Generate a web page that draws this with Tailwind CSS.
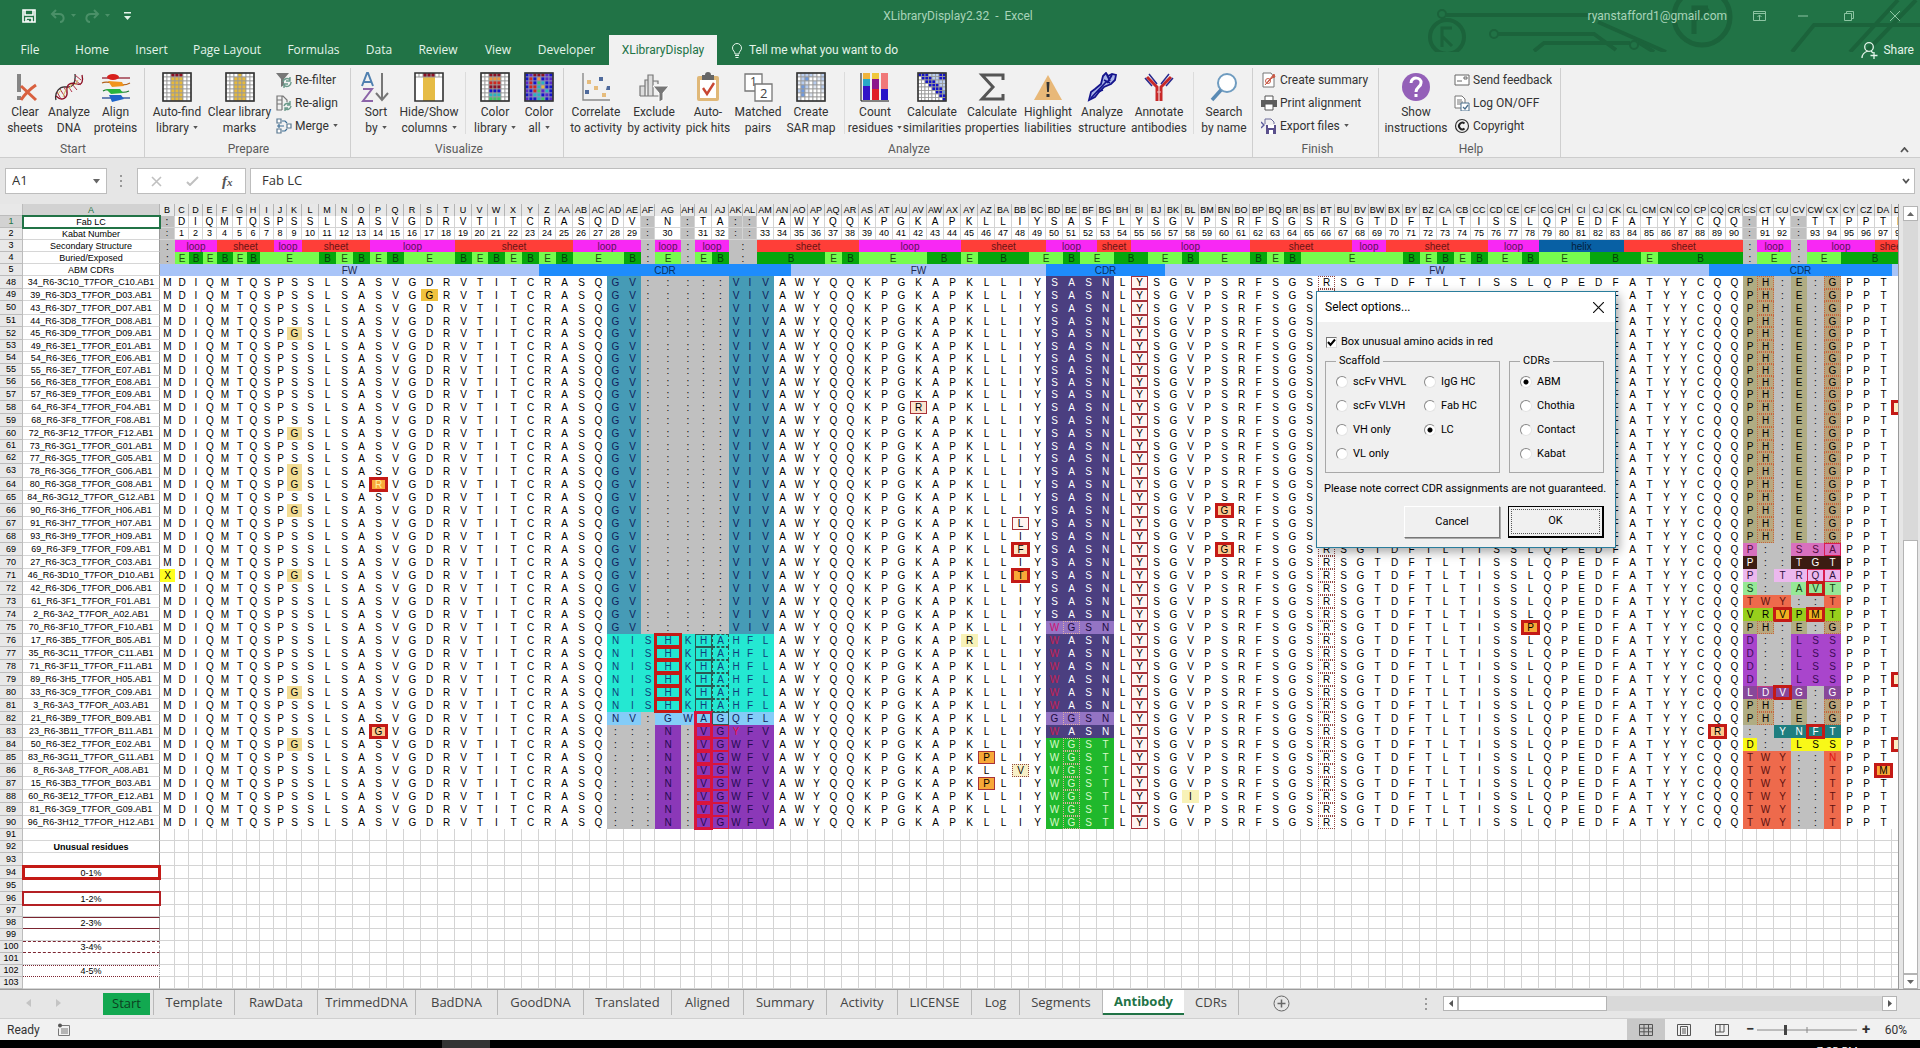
<!doctype html>
<html lang="en">

  <head>
    <meta charset="utf-8">
    <title>XLibraryDisplay2.32 - Excel</title>
    <script src="https://cdn.jsdelivr.net/npm/@tailwindcss/browser@4"></script>
    <script>
     // ---- ribbon ----
     const INK = {
       '.': '#fff', y: '#e6b93c', r: '#8c1024', o: '#f0913c', R: '#d0281e', b: '#1414c8', g: '#3cc864',
       l: '#b9cdee', k: '#6f9ae0', p: '#5a28c8', c: '#28b4be', d: '#1e3c96', n: '#dfe6f2',
     };
     // small spreadsheet picture, one letter per cell
     function sheetIcon(rows, line = '#9a9a9a') {
       const n = rows[0].length;
       const w = 28 / n;
       const h = 28 / rows.length;
       const cells = rows.map((row, y) => [...row].map((c, x) =>
         `<rect x="${1 + x * w}" y="${1 + y * h}" width="${w}" height="${h}" fill="${INK[c]}" stroke="${line}" stroke-width=".8"/>`
       ).join('')).join('');
       return `${cells}<rect x="1" y="1" width="28" height="28" fill="none" stroke="#333" stroke-width="1.6"/>`;
     }
     const ICONS = {
       clear: '<path d="M7 2h4v18H7z" fill="#858585"/><path d="M7 24h4v4H7z" fill="#858585"/><path d="M11 14l15 14M26 13C20 17 15 22 11 28" stroke="#d9603f" stroke-width="3" fill="none"/>',
       dna: '<path d="M2 28C0 20 6 14 12 15S22 12 21 2" fill="none" stroke="#333" stroke-width="1.3"/><path d="M2 24c6 6 12 2 11-5s4-9 10-7 6-5 5-9" fill="none" stroke="#8c1024" stroke-width="1.3"/><path d="M3 20l4 7M6 17l5 8M10 15l3 6M14 14l4 6M18 12l5 6M20 7l7 6M21 3l6 5" stroke="#b03048" stroke-width="1"/><path d="M4 22l3-4M9 25l3-8M15 17l3-5M21 13l3-5" stroke="#d8c060" stroke-width="1"/>',
       align: '<g stroke-width="1.2"><path d="M1 6h28" stroke="#8c1024"/><ellipse cx="12" cy="5" rx="6" ry="3" fill="#d8201c"/><path d="M1 11c8-4 18 6 28 0" stroke="#b0601c" fill="none"/><path d="M7 9l14 1 2 4-12 1z" fill="#f0941c"/><path d="M2 19c8-5 16 5 26 0" stroke="#147828" fill="none"/><path d="M5 17l14 0 3 4-12 1z" fill="#28b43c"/><path d="M1 26h28" stroke="#143c8c" /><path d="M8 23l12 0 3 4-12 3z" fill="#1e64c8"/></g>',
       autofind: sheetIcon(['..rrr..', '..yyy..', '..yyy..', '..yyy..', '..yyy..', '..yyy..', '..yyy..']),
       clearlib: sheetIcon(['...y...', '..yyy..', '..yyy..', '..yyy..', '..yyy..', '..yyy..', '..yyy..']),
       sort: '<path d="M1 14L6 1h1l5 13M3 10h7" fill="none" stroke="#5080b0" stroke-width="2"/><path d="M2 17h9L2 29h10" fill="none" stroke="#8c64a8" stroke-width="2"/><path d="M21 1v26M15 21l6 7 6-7" fill="none" stroke="#777" stroke-width="2"/>',
       hide: '<path d="M1 1h28v28H1z" fill="#fff"/><path d="M9 5h12v24H9z" fill="#e6bc46"/><path d="M9 1h12v4H9z" fill="#8c1024"/><path d="M5 1v4M9 1v4M13 1v4M17 1v4M21 1v4M25 1v4M1 5h28" stroke="#999"/><path d="M1 1h28v28H1z" fill="none" stroke="#333" stroke-width="1.6"/>',
       colorlib: sheetIcon(['..rrr..', '..ooo..', '..RRR..', '..rrr..', '..bbb..', '..ccc..', '..ggg..']),
       colorall: sheetIcon(['bprrrpb', 'bRbobpp', 'pRbgcbp', 'bRRcybb', 'pbRgpcb', 'bpccbpb', 'pbbcgbp'], '#8a8aba'),
       correlate: '<path d="M2 1v27h27" fill="none" stroke="#8a8a8a" stroke-width="1.4"/><path d="M18 5h4v4h-4zM4 18h4v4H4zM26 14h3v4h-4z" fill="#4f6a9c"/><path d="M6 8h4v4H6zM13 14h4v4h-4zM21 21h4v4h-4z" fill="#e6bc7c"/>',
       exclude: '<path d="M1 24V14h5v10M6 24V8h3M9 24V3h5v21M14 9h5v3M1 24h19" fill="#ddd" stroke="#777" stroke-width="1.2"/><path d="M14 14h16l-6 7v7l-4 2v-9z" fill="#777" stroke="#fff" stroke-width="1"/>',
       pick: '<rect x="4" y="4" width="22" height="25" rx="2" fill="#e0b878"/><path d="M7 8h16v18H7z" fill="#fff"/><path d="M9 3h3a3 3 0 016 0h3v5H9z" fill="#666"/><path d="M10 16l4 6 7-11" fill="none" stroke="#c84632" stroke-width="2.4"/>',
       matched: '<path d="M2 2h17v17H2z" fill="#fff" stroke="#777" stroke-width="1.3"/><path d="M12 12h17v17H12z" fill="#fff" stroke="#777" stroke-width="1.3"/><text x="7" y="14" font-size="12" fill="#444" font-family="Open Sans">1</text><text x="17" y="26" font-size="13" fill="#444" font-family="Open Sans">2</text>',
       sar: sheetIcon(['nllln.l', '.lk..nl', 'nln.l.n', '.kl.n.l', 'lkn...n', '.k.n...', 'n......']),
       count: '<path d="M3 1h7v6H3z" fill="#f0b43c"/><path d="M3 7h7v7H3z" fill="#28aac8"/><path d="M3 14h7v14H3z" fill="#3214c8"/><path d="M12 1h7v6h-7z" fill="#f0c83c"/><path d="M12 7h7v10h-7z" fill="#8c148c"/><path d="M12 17h7v11h-7z" fill="#e01e28"/><path d="M21 1h7v16h-7z" fill="#f07878"/><path d="M21 17h7v11h-7z" fill="#2814c8"/><path d="M1 1v28h28" fill="none" stroke="#111"/>',
       similar: sheetIcon(['bbblllbb', '.bbbllbb', '..bbblll', '...bbbll', '....bbbl', '.....bbk', '......bb', '.......b']),
       sigma: '<path d="M26 8V3H5l11 12L5 27h21v-5" fill="none" stroke="#555" stroke-width="3"/>',
       warn: '<path d="M15 3L29 28H1z" fill="#e8b878"/><path d="M13.5 10h3l-.6 10h-1.8zM13.5 22h3v3h-3z" fill="#333"/>',
       structure: '<path d="M2 28l2-8 4-3 6-5 2-8 3-3 2 3 4-2 4 1-1 5-4 4-7 3-5 5-4 5z" fill="#a9b4e8" stroke="#14148c" stroke-width="1.8"/><path d="M4 26L20 9M10 20l6-2M17 8l6 3M20 3l3 6M25 3l-5 8" stroke="#14148c" stroke-width="1.8" fill="none"/>',
       antibody: '<path d="M13 29V15L3 5M17 29V15L27 5" fill="none" stroke="#c82828" stroke-width="3"/><path d="M5 2l8 10M1 6l7 8M25 2l-8 10M29 6l-7 8" stroke="#28288c" stroke-width="1.5"/><path d="M13 20h4" stroke="#f0c0c0"/>',
       search: '<circle cx="18" cy="11" r="9" fill="#fff" stroke="#6f9cc0" stroke-width="2"/><path d="M12 18L3 28" stroke="#5a8ab4" stroke-width="3.5"/>',
       help: '<ellipse cx="15" cy="15" rx="14" ry="14" fill="#9460b8"/><path d="M10 11c0-7 11-6 10 0 0 4-5 4-5 9" fill="none" stroke="#fff" stroke-width="3"/><path d="M13.5 22h3v3h-3z" fill="#fff"/>',
       refilter: '<path d="M0 1h13L8 7v6l-3 2V7z" fill="#777"/><path d="M7 10a4 4 0 017-2M15 10a4 4 0 01-7 3M14 5v4h-4M8 16v-4h4" fill="none" stroke="#6a9a8a" stroke-width="1.4"/>',
       realign: '<path d="M6 15H1V1h6l4 4v2M1 5h5M1 9h5M6 1v14" fill="none" stroke="#777" stroke-width="1.2"/><path d="M8 11a4 4 0 016-2M15 11a4 4 0 01-6 3M14 6v4h-3M9 16v-3h3" fill="none" stroke="#6a9a8a" stroke-width="1.4"/>',
       merge: '<path d="M1 1h4v4H1zM1 11h4v4H1zM11 6h4v4h-4z" fill="#fff" stroke="#5a7890" stroke-width="1.2"/><path d="M3 6v4M1 8h7M6 3h3l2 2M6 13h3l2-2" fill="none" stroke="#3c6e96" stroke-width="1.2"/>',
       summary: '<path d="M2 1h8l3 4v10H2z" fill="#fff" stroke="#777"/><circle cx="7" cy="9" r="2.5" fill="none" stroke="#c85a46"/><path d="M4 13l9-11 1 3-3 1z" fill="#c85a46" stroke="#c85a46"/>',
       print: '<path d="M4 1h8v5H4z" fill="#fff" stroke="#555"/><path d="M0 5h16v7H0z" fill="#5c5c5c"/><path d="M4 9h8v6H4z" fill="#fff" stroke="#555"/>',
       export: '<path d="M4 6V1h6l3 3v2" fill="none" stroke="#6a6a9a"/><path d="M0 4l3 3-3 3" fill="none" stroke="#5a5a9a" stroke-width="1.4"/><path d="M5 7h10v9H5z" fill="#5a508c"/><path d="M7 7h6v3H7zM8 12h4v4H8z" fill="#fff"/>',
       mail: '<path d="M1 3h14v10H1z" fill="#fff" stroke="#666"/><path d="M10 5h3v2h-3zM3 9h5" stroke="#666" fill="none"/>',
       log: '<path d="M1 1h7l3 3v9H1zM3 5h5M3 7h6M3 9h4" fill="#fff" stroke="#777"/><path d="M7 8h8v8H7z" fill="#fff" stroke="#4a6e8c"/><path d="M9 12l2 2 3-4" fill="none" stroke="#4a6e8c" stroke-width="1.3"/>',
       copyright: '<circle cx="8" cy="8" r="6.5" fill="none" stroke="#333" stroke-width="1.2"/><path d="M10.5 5.5a3.3 3.3 0 100 5" fill="none" stroke="#222" stroke-width="2"/>',
     };
     const BIG = 'flex flex-col items-center gap-[2px] shrink-0';
     const RIBBON = [
       { title: 'Start', cls: 'w-[145px] pl-[2px]', items: [
         ['clear', 'Clear', 'sheets', 'w-[46px]'],
         ['dna', 'Analyze', 'DNA', 'w-[42px]'],
         ['align', 'Align', 'proteins', 'w-[51px]'],
       ] },
       { title: 'Prepare', cls: 'w-[206px] pl-[2px]', items: [
         ['autofind', 'Auto-find', 'library', 'w-[60px]', true],
         ['clearlib', 'Clear library', 'marks', 'w-[65px]'],
         { small: [['refilter', 'Re-filter'], ['realign', 'Re-align'], ['merge', 'Merge', true]] },
       ] },
       { title: 'Visualize', cls: 'w-[213px] pl-1', items: [
         ['sort', 'Sort', 'by', 'w-[42px]', true],
         ['hide', 'Hide/Show', 'columns', 'w-[64px]', true],
         'line',
         ['colorlib', 'Color', 'library', 'w-[50px]', true],
         ['colorall', 'Color', 'all', 'w-[38px]', true],
       ] },
       { title: 'Analyze', cls: 'w-[689px] pl-[2px]', items: [
         ['correlate', 'Correlate', 'to activity', 'w-[60px]'],
         ['exclude', 'Exclude', 'by activity', 'w-[56px]'],
         ['pick', 'Auto-', 'pick hits', 'w-[52px]'],
         ['matched', 'Matched', 'pairs', 'w-[48px]'],
         ['sar', 'Create', 'SAR map', 'w-[58px]'],
         'line',
         ['count', 'Count', 'residues', 'w-[52px]', true],
         ['similar', 'Calculate', 'similarities', 'w-[62px]'],
         ['sigma', 'Calculate', 'properties', 'w-[58px]'],
         ['warn', 'Highlight', 'liabilities', 'w-[54px]'],
         ['structure', 'Analyze', 'structure', 'w-[54px]'],
         ['antibody', 'Annotate', 'antibodies', 'w-[60px]'],
         'line',
         ['search', 'Search', 'by name', 'w-[52px]'],
       ] },
       { title: 'Finish', cls: 'w-[126px] pl-1', items: [
         { small: [['summary', 'Create summary'], ['print', 'Print alignment'], ['export', 'Export files', true]] },
       ] },
       { title: 'Help', cls: 'w-[182px] pl-[3px]', items: [
         ['help', 'Show', 'instructions', 'w-[68px]'],
         { small: [['mail', 'Send feedback'], ['log', 'Log ON/OFF'], ['copyright', 'Copyright']] },
       ] },
     ];
     const CARET = '<svg class="inline ml-1 mb-[2px] w-[5px] h-[3px]" viewBox="0 0 6 4"><path d="M0 0h6L3 4z" fill="#555"/></svg>';
     function addRibbon() {
       document.getElementById('ribbon').innerHTML = RIBBON.map((group) => {
         const items = group.items.map((item) => {
           if (item === 'line') {
             return '<div class="w-px h-[62px] bg-[#dcdcdc] mx-1 shrink-0"></div>';
           }
           if (item.small) {
             return `<div class="flex flex-col ml-1 -mt-1">${item.small.map(([icon, text, drop]) => `
               <button class="flex items-center gap-[3px] h-[23px] whitespace-nowrap">
                 <svg class="w-4 h-4" viewBox="0 0 16 16">${ICONS[icon]}</svg><span>${text}${drop ? CARET : ''}</span>
               </button>`).join('')}</div>`;
           }
           const [icon, top, bottom, width, drop] = item;
           return `
             <button class="${BIG} ${width}">
               <svg class="w-[30px] h-[30px]" viewBox="0 0 30 30">${ICONS[icon]}</svg>
               <span class="leading-4 whitespace-nowrap">${top}<br>${bottom}${drop ? CARET : ''}</span>
             </button>`;
         }).join('');
         return `
           <section class="flex flex-col justify-between mt-[3px] border-r border-[#cfcfcf] shrink-0 ${group.cls}">
             <div class="flex pt-1">${items}</div>
             <h2 class="text-center text-[#5a5a5a] leading-4">${group.title}</h2>
           </section>`;
       }).join('');
     }

     // ---- worksheet ----
     const COLS = [];
     for (let i = 2; i <= 106; i++) {
       COLS.push((i > 26 ? String.fromCharCode(64 + Math.floor((i - 1) / 26)) : '') + String.fromCharCode(65 + (i - 1) % 26));
     }
     const WIDTHS = {
       B: 15, C: 14, D: 14, E: 14, F: 16, G: 14, H: 13, I: 14, J: 13, K: 15, V: 16,
       AF: 14, AG: 26, AH: 14, AK: 14, AL: 14, CS: 14, CV: 16,
     };
     const at = (name) => COLS.indexOf(name);

     const GRAY = 'bg-[#c0c0c0]';
     const THICK = 'outline-3 -outline-offset-2 outline-[#c41a16]';
     const THIN = 'outline-1 -outline-offset-1 outline-[#a8323a]';
     const DARK = 'outline-1 -outline-offset-1 outline-[#2c5a54]';
     const DOTS = 'outline-1 -outline-offset-1 outline-dotted outline-[#904440]';
     const RUST = 'outline-1 -outline-offset-1 outline-dotted outline-[#c8643c]';
     const DASH = 'outline-1 -outline-offset-1 outline-dashed outline-[#2c5a54]';
     const TEAL = 'bg-[#469bb6] text-[#10205a]';
     const CYAN = 'bg-[#24e8d2] text-[#10407a]';
     const VIOLET = 'bg-[#8b38b8] text-[#240a50]';
     const INDIGO = 'bg-[#4b3f80] text-white';
     const LILAC = 'bg-[#9474c4] text-[#1c0a40]';
     const GREEN = 'bg-[#20b82c] text-[#d8f8c8]';
     const KHAKI = 'bg-[#b0ac82]';
     const CORAL = 'bg-[#ee6a4c] text-[#5c1010]';
     const PURPLE = 'bg-[#a945cc] text-[#3c0a58]';
     const PALE = 'bg-[#f2dc94]';
     const ORANGE = 'bg-[#f8a838]';
     const PEACH = 'bg-[#fcc88c]';

     const HEAD = ':DIQMTQSPSSLSASVGDRVTITCRASQDV:N:TA::VAWYQQKPGKAPKLLIYSASFLYSGVPSRFSGSRSGTDFTLTISSLQPEDFATYYCQQ:HY:TTPPTF';
     const BASE = 'MDIQMTQSPSSLSASVGDRVTITCRASQGV:::::VIVAWYQQKPGKAPKLLIYSASNLYSGVPSRFSGSRSGTDFTLTISSLQPEDFATYYCQQPH:E:GPPT ';

     // [last column, label] runs for the merged heading rows
     const STRUCTURE = [['B', ':'], ['E', 'loop'], ['I', 'sheet'], ['K', 'loop'], ['O', 'sheet'], ['T', 'loop'], ['AA', 'sheet'],
       ['AE', 'loop'], ['AF', ':'], ['AG', 'loop'], ['AH', ':'], ['AJ', 'loop'], ['AL', ':'], ['AR', 'sheet'], ['AX', 'loop'],
       ['BC', 'sheet'], ['BF', 'loop'], ['BH', 'sheet'], ['BO', 'loop'], ['BU', 'sheet'], ['BW', 'loop'], ['CC', 'sheet'],
       ['CF', 'loop'], ['CK', 'helix'], ['CR', 'sheet'], ['CS', ':'], ['CU', 'loop'], ['CV', ':'], ['CZ', 'loop'], ['DB', 'sheet']];
     const BURIED = [['B', ':'], ['C', 'E'], ['D', 'B'], ['E', 'E'], ['F', 'B'], ['G', 'E'], ['H', 'B'], ['L', 'E'], ['M', 'B'],
       ['N', 'E'], ['O', 'B'], ['P', 'E'], ['Q', 'B'], ['T', 'E'], ['U', 'B'], ['V', 'E'], ['W', 'B'], ['X', 'E'], ['Y', 'B'],
       ['Z', 'E'], ['AA', 'B'], ['AD', 'E'], ['AE', 'B'], ['AF', ':'], ['AG', 'E'], ['AH', ':'], ['AI', 'E'], ['AJ', 'B'],
       ['AL', ':'], ['AP', 'B'], ['AQ', 'E'], ['AR', 'B'], ['AV', 'E'], ['AX', 'B'], ['AY', 'E'], ['BB', 'B'], ['BD', 'E'],
       ['BE', 'B'], ['BG', 'E'], ['BI', 'B'], ['BK', 'E'], ['BL', 'B'], ['BO', 'E'], ['BP', 'B'], ['BQ', 'E'], ['BR', 'B'],
       ['BX', 'E'], ['BY', 'B'], ['BZ', 'E'], ['CA', 'B'], ['CB', 'E'], ['CC', 'B'], ['CE', 'E'], ['CF', 'B'], ['CI', 'E'],
       ['CL', 'B'], ['CM', 'E'], ['CR', 'B'], ['CS', ':'], ['CU', 'E'], ['CV', ':'], ['CX', 'E'], ['DB', 'B']];
     const REGIONS = [['Y', 'FW'], ['AN', 'CDR'], ['BC', 'FW'], ['BJ', 'CDR'], ['CP', 'FW'], ['DA', 'CDR'], ['DB', '']];
     const RUN_CLS = {
       ':': GRAY,
       loop: 'bg-[#f828f4] text-[#5a1058]',
       sheet: 'bg-[#ff3e38] text-[#681414]',
       helix: 'bg-[#0860a4] text-[#04203c]',
       E: 'bg-[#76fc4e] text-[#1c5010]',
       B: 'bg-[#06a60c] text-[#044008]',
       FW: 'bg-[#a8c4f8] text-[#202850]',
       CDR: 'bg-[#1e8cfc] text-[#08305c]',
       '': 'bg-[#a8c4f8]',
     };

     const NAMES = `34_R6-3C10_T7FOR_C10 39_R6-3D3_T7FOR_D03 43_R6-3D7_T7FOR_D07 44_R6-3D8_T7FOR_D08 45_R6-3D9_T7FOR_D09
       49_R6-3E1_T7FOR_E01 54_R6-3E6_T7FOR_E06 55_R6-3E7_T7FOR_E07 56_R6-3E8_T7FOR_E08 57_R6-3E9_T7FOR_E09
       64_R6-3F4_T7FOR_F04 68_R6-3F8_T7FOR_F08 72_R6-3F12_T7FOR_F12 73_R6-3G1_T7FOR_G01 77_R6-3G5_T7FOR_G05
       78_R6-3G6_T7FOR_G06 80_R6-3G8_T7FOR_G08 84_R6-3G12_T7FOR_G12 90_R6-3H6_T7FOR_H06 91_R6-3H7_T7FOR_H07
       93_R6-3H9_T7FOR_H09 69_R6-3F9_T7FOR_F09 27_R6-3C3_T7FOR_C03 46_R6-3D10_T7FOR_D10 42_R6-3D6_T7FOR_D06
       61_R6-3F1_T7FOR_F01 2_R6-3A2_T7FOR_A02 70_R6-3F10_T7FOR_F10 17_R6-3B5_T7FOR_B05 35_R6-3C11_T7FOR_C11
       71_R6-3F11_T7FOR_F11 89_R6-3H5_T7FOR_H05 33_R6-3C9_T7FOR_C09 3_R6-3A3_T7FOR_A03 21_R6-3B9_T7FOR_B09
       23_R6-3B11_T7FOR_B11 50_R6-3E2_T7FOR_E02 83_R6-3G11_T7FOR_G11 8_R6-3A8_T7FOR_A08 15_R6-3B3_T7FOR_B03
       60_R6-3E12_T7FOR_E12 81_R6-3G9_T7FOR_G09 96_R6-3H12_T7FOR_H12`.split(/\s+/);
     const HEIGHTS = {
       49: 12, 51: 12, 53: 12, 54: 12, 55: 12, 56: 12, 50: 14, 61: 12, 62: 12, 63: 14,
     };
     const rowHeight = (n) => HEIGHTS[n] ?? (n < 6 ? 12 : n < 91 ? 13 : n > 92 && n < 97 ? 13 : 12);

     // [first row, last row, first column, residues, fill]
     const LOOPS = [
       [48, 75, 'AD', 'GV:::::VIV', TEAL],
       [76, 81, 'AD', 'NISHKHAHFL', CYAN],
       [82, 82, 'AD', 'NV:GWAGQFL', 'bg-[#84ccf8] text-[#10205a]'],
       [83, 83, 'AD', ':::N:VGYFV', VIOLET],
       [84, 90, 'AD', ':::N:VGWFV', VIOLET],
       [48, 74, 'BD', 'SASN', INDIGO],
       [75, 75, 'BD', 'WGSN', LILAC],
       [76, 81, 'BD', 'WASN', INDIGO],
       [82, 82, 'BD', 'GGSN', LILAC],
       [83, 83, 'BD', 'WASN', INDIGO],
       [84, 90, 'BD', 'WGST', GREEN],
       [48, 68, 'CS', 'PH:E:G', KHAKI],
       [69, 69, 'CS', 'P::SSA', 'bg-[#d870be] text-[#500a40]'],
       [70, 70, 'CS', 'P::TGT', 'bg-[#3c1c12] text-white'],
       [71, 71, 'CS', 'P:TRQA', 'bg-[#ecb8ee] text-[#301040]'],
       [72, 72, 'CS', 'S::AVT', 'bg-[#96e896] text-[#104010]'],
       [73, 73, 'CS', 'TWY::T', CORAL],
       [74, 74, 'CS', 'VRVPMT', 'bg-[#98d01c]'],
       [75, 75, 'CS', 'PH:E:G', KHAKI],
       [76, 79, 'CS', 'D::LSS', PURPLE],
       [80, 80, 'CS', 'LDVG:G', 'bg-[#88489a] text-white'],
       [81, 82, 'CS', 'PH:E:G', KHAKI],
       [83, 83, 'CS', '::YNFT', 'bg-[#1e7e80] text-white'],
       [84, 84, 'CS', 'D::LSS', 'bg-[#f8f818]'],
       [85, 90, 'CS', 'TWY::T', CORAL],
     ];
     // [rows, column, residue or null to keep it, classes]
     const MARKS = [
       [[49], 'S', 'G', 'bg-[#f0c23e]'],
       [[52, 60, 63, 64, 66, 71, 80, 84], 'K', 'G', PALE],
       [[64], 'P', 'R', `${ORANGE} text-[#fff0a0] ${THICK}`],
       [[83], 'P', 'G', `${PEACH} ${THICK}`],
       [[71], 'B', 'X', 'bg-[#ffff20]'],
       [[58], 'AV', 'R', `bg-[#fce4d0] ${THIN}`],
       [[67], 'BB', 'L', `bg-[#fff4f0] ${THIN}`],
       [[69], 'BB', 'F', `bg-[#fce4c4] ${THICK}`],
       [[71], 'BB', 'T', `${ORANGE} ${THICK}`],
       [[86], 'BB', 'V', `bg-[#f8f0c8] ${DOTS}`],
       [[76], 'AY', 'R', 'bg-[#f8f2b8]'],
       [[88], 'BL', 'I', 'bg-[#f8f2b8]'],
       [[85, 87], 'AZ', 'P', `${ORANGE} ${THIN}`],
       [[66, 69], 'BN', 'G', `${PEACH} ${THICK}`],
       [[75], 'CF', 'P', `${ORANGE} ${THICK}`],
       [[83], 'CQ', 'R', `${PEACH} ${THICK}`],
       [[86], 'DA', 'M', `${ORANGE} ${THICK}`],
       [[58, 79, 84], 'DB', '', `bg-[#fcecc4] ${THICK}`],
       [[76, 77, 78, 79, 80, 81], 'AG', null, THICK],
       [[76, 77, 78, 79, 80, 81], 'AJ', null, DASH],
       [[82], 'AJ', null, DARK],
       [[83, 84, 85, 86, 87, 88, 89, 90], 'AJ', null, 'outline-1 -outline-offset-1 outline-[#d8143c]'],
       [[76, 77, 78, 79, 80, 81], 'AI', null, DARK],
       [[82, 83, 84, 85, 86, 87, 88, 89, 90], 'AI', null, 'outline-3 -outline-offset-2 outline-[#d8143c]'],
       [[76, 77, 78, 79, 80, 81, 83], 'BD', null, 'bg-[#4b3f80] text-[#c81e50]'],
       [[75], 'BD', null, 'bg-[#9474c4] text-[#d01070]'],
       [[83], 'AK', null, 'bg-[#8b38b8] text-[#e01040]'],
       [[75, 82, 84, 85, 86, 87, 88, 89, 90], 'BE', null, 'outline-1 -outline-offset-1 outline-dotted outline-[#e0b0a0]'],
       [[69, 71], 'CX', null, 'outline-1 -outline-offset-1 outline-[#d81c50]'],
       [[71], 'CW', null, 'outline-1 -outline-offset-1 outline-[#d81c50]'],
       [[72, 83], 'CW', null, THICK],
       [[74], 'CU', null, `bg-[#f0b020] ${THICK}`],
       [[74], 'CW', null, `bg-[#f0b020] ${THICK}`],
       [[80], 'CU', null, THICK],
       [[80], 'CT', null, 'outline-1 -outline-offset-1 outline-[#c83c80]'],
       [[85], 'CX', 'N', 'bg-[#ee6a4c] text-[#e01010]'],
     ];

     function gridRow(n, label, cells, labelCls = 'border-b border-b-[#d6d6d6]') {
       const on = n === 1 ? 'bg-[#d2d2d2] text-[#217346]' : 'bg-[#e8e8e8]';
       return `
         <tr style="height:${rowHeight(n)}px">
           <th scope="row" class="p-0 text-[9px] leading-[11px] font-normal border-b border-r border-[#bcbcbc] ${on}">${n}</th>
           <td class="p-0 text-[9px] leading-[10px] border-r border-r-[#9a9a9a] bg-white ${labelCls}">${label}</td>
           ${cells}
         </tr>`;
     }
     function runs(list) {
       let from = 0;
       return list.map(([last, text]) => {
         const span = at(last) - from + 1;
         from += span;
         return `<td colspan="${span}" class="p-0 ${RUN_CLS[text]}">${text}</td>`;
       }).join('');
     }
     function residues(n) {
       const text = [...BASE];
       const cls = COLS.map(() => '');
       LOOPS.filter(([a, b]) => n >= a && n <= b).forEach(([, , col, seq, fill]) => {
         [...seq].forEach((c, i) => {
           text[at(col) + i] = c;
           cls[at(col) + i] = c === ':' ? GRAY : fill;
         });
       });
       cls[at('BI')] = `bg-[#fff4f2] ${THIN}`;
       cls[at('BT')] = DOTS;
       if (cls[at('CS')] === KHAKI) {
         cls[at('CT')] = `bg-[#baa880] ${RUST}`;
         cls[at('CX')] = `bg-[#b8a27a] ${RUST}`;
       }
       MARKS.filter(([rows]) => rows.includes(n)).forEach(([, col, c, add]) => {
         const i = at(col);
         if (c !== null) text[i] = c;
         cls[i] = add.startsWith('bg-') ? add : `${cls[i]} ${add}`;
       });
       return COLS.map((_, i) => `<td class="p-0 ${cls[i]}">${text[i]}</td>`).join('');
     }
     function addSheet() {
       const cols = COLS.map((c) => `<col style="width:${WIDTHS[c] ?? 17}px">`).join('');
       const heads = COLS.map((c) => `<th scope="col" class="p-0 font-normal border-r border-[#b4b4b4]">${c}</th>`).join('');
       const line = 'p-0 border-r border-b border-[#d4d4d4]';
       let number = 0;
       const first = [...HEAD].map((c) => `<td class="${line} ${c === ':' ? GRAY : ''}">${c}</td>`).join('');
       const second = [...HEAD].map((c) => `<td class="${line} text-[9px] ${c === ':' ? GRAY : ''}">${c === ':' ? c : ++number}</td>`).join('');
       const body = [
         gridRow(1, 'Fab LC', first, 'relative outline-2 -outline-offset-1 outline-[#217346]'),
         gridRow(2, 'Kabat Number', second),
         gridRow(3, 'Secondary Structure', runs(STRUCTURE)),
         gridRow(4, 'Buried/Exposed', runs(BURIED)),
         gridRow(5, 'ABM CDRs', runs(REGIONS)),
       ];
       NAMES.forEach((name, i) => body.push(gridRow(48 + i, `${name}.AB1`, residues(48 + i))));
       const legend = {
         92: ['Unusual residues', 'font-bold border-b border-b-[#d6d6d6]'],
         94: ['0-1%', 'outline-3 -outline-offset-2 outline-[#c41a16]'],
         96: ['1-2%', 'outline-2 -outline-offset-1 outline-[#b42024]'],
         98: ['2-3%', 'border-y border-y-[#7c2430]'],
         100: ['3-4%', 'border-y border-y-[#7c2430] border-dashed'],
         102: ['4-5%', 'border-y border-y-[#7c2430] border-dotted'],
       };
       const empty = COLS.map(() => `<td class="${line}"></td>`).join('');
       for (let n = 91; n <= 103; n++) {
         body.push(gridRow(n, ...(legend[n] ? [legend[n][0], empty, legend[n][1]] : ['', empty])));
       }
       document.getElementById('sheet').innerHTML = `
         <colgroup><col style="width:23px"><col style="width:137px">${cols}</colgroup>
         <thead class="text-[9px] leading-[11px] bg-[#e8e8e8]">
           <tr style="height:12px">
             <th class="p-0 border-r border-b border-[#bcbcbc]"></th>
             <th scope="col" class="p-0 font-normal bg-[#d2d2d2] border-r border-[#b4b4b4] text-[#217346]">A</th>${heads}
           </tr>
         </thead>
         <tbody>${body.join('')}</tbody>`;
     }

     // ---- sheet tabs ----
     const TABS = [
       ['Template', 'w-[81px]'], ['RawData', 'w-[83px]'], ['TrimmedDNA', 'w-[98px]'], ['BadDNA', 'w-[82px]'],
       ['GoodDNA', 'w-[86px]'], ['Translated', 'w-[88px]'], ['Aligned', 'w-[72px]'], ['Summary', 'w-[83px]'],
       ['Activity', 'w-[71px]'], ['LICENSE', 'w-[74px]'], ['Log', 'w-[48px]'], ['Segments', 'w-[83px]'],
       ['Antibody', 'w-[81px]'], ['CDRs', 'w-[55px]'],
     ];
     function addTabs() {
       document.getElementById('tabs').innerHTML = TABS.map(([name, width]) => {
         const look = name === 'Antibody'
           ? 'h-[25px] bg-white font-bold text-[#217346] border-b-2 border-[#217346]'
           : 'h-[25px] border-r border-[#b8b8b8]';
         return `<button class="${width} ${look}">${name}</button>`;
       }).join('');
     }
     window.onload = () => {
       addRibbon();
       addSheet();
       addTabs();
     };
    </script>
  </head>

  <body class="h-screen flex flex-col overflow-hidden bg-[#e6e6e6] text-[12px] text-[#333] font-['Open_Sans',sans-serif]">

    <header class="relative bg-[#217346] text-[#e4f4ea] shrink-0">
      <svg class="absolute right-0 top-0 w-[500px] h-[52px]" viewBox="0 0 500 52" fill="none" stroke="#1b633b" stroke-width="4">
        <circle cx="22" cy="14" r="4" stroke-width="2"/><path d="M26 15h146M178 22l68 30"/>
        <circle cx="27" cy="37" r="17"/><path d="M22 47V28h10M22 36l10 10" stroke-width="3"/>
        <circle cx="74" cy="34" r="4" stroke-width="2"/><path d="M78 34h96l22 16M114 51l10-8h86M218 42l16 10"/><circle cx="214" cy="45" r="4" stroke-width="2"/>
        <circle cx="282" cy="17" r="28" stroke-width="5"/><path d="M274 34V8h14M274 20l14-12" stroke-width="5"/>
        <path d="M372 52l22-27h106M430 52L478 0M446 52L496 0"/>
      </svg>
      <div class="relative flex items-center h-[32px] mb-[3px] text-[#a8d4b9] font-[Roboto,sans-serif]">
        <button class="ml-[22px]" aria-label="Save"><svg class="w-[14px] h-[14px]" viewBox="0 0 14 14" fill="none" stroke="#fff" stroke-width="1.6"><path d="M1 1h12v12H1zM3 1v5h8V1M4 13V9h6v4M6 11v2"/></svg></button>
        <button class="ml-[14px]" aria-label="Undo"><svg class="w-[28px] h-[14px]" viewBox="0 0 28 14" fill="none" stroke="#4a9068" stroke-width="2"><path d="M6 1L2 5l4 4M2 5h7c6 0 6 8 1 8"/><path d="M21 5h5l-2.5 3z" fill="#4a9068" stroke="none"/></svg></button>
        <button class="ml-[7px]" aria-label="Redo"><svg class="w-[28px] h-[14px]" viewBox="0 0 28 14" fill="none" stroke="#4a9068" stroke-width="2"><path d="M9 1l4 4-4 4M13 5H6c-6 0-6 8-1 8"/><path d="M20 5h5l-2.5 3z" fill="#4a9068" stroke="none"/></svg></button>
        <button class="ml-[11px]" aria-label="Customize toolbar"><svg class="w-[7px] h-[8px]" viewBox="0 0 7 8"><path d="M0 0h7v1.5H0zM0 4h7L3.5 8z" fill="#e4f4ea"/></svg></button>
        <h1 class="absolute left-0 right-[4px] text-center pointer-events-none">XLibraryDisplay2.32&nbsp; -&nbsp; Excel</h1>
        <div class="ml-auto flex items-center">
          <span class="mr-[26px]">ryanstafford1@gmail.com</span>
          <button aria-label="Ribbon display options" class="mr-[32px]"><svg class="w-[13px] h-[10px]" viewBox="0 0 13 10" fill="none" stroke="#8cc4a2"><path d="M.5.5h12v9H.5zM.5 2.5h12M6.5 9V4M4.5 6l2-2 2 2"/></svg></button>
          <button aria-label="Minimize" class="mr-[36px]"><svg class="w-[10px] h-[10px]" viewBox="0 0 10 10"><path d="M0 5h10" stroke="#8cc4a2"/></svg></button>
          <button aria-label="Restore" class="mr-[36px]"><svg class="w-[10px] h-[10px]" viewBox="0 0 10 10" fill="none" stroke="#8cc4a2"><path d="M.5 2.5h7v7h-7zM2.5 2.5v-2h7v7h-2"/></svg></button>
          <button aria-label="Close" class="mr-[20px]"><svg class="w-[10px] h-[10px]" viewBox="0 0 10 10" stroke="#8cc4a2"><path d="M0 0l10 10M10 0L0 10"/></svg></button>
        </div>
      </div>
      <nav class="relative flex h-[30px]">
        <button class="w-[60px]">File</button>
        <button class="w-[64px]">Home</button>
        <button class="w-[55px]">Insert</button>
        <button class="w-[96px]">Page Layout</button>
        <button class="w-[77px]">Formulas</button>
        <button class="w-[54px]">Data</button>
        <button class="w-[64px]">Review</button>
        <button class="w-[56px]">View</button>
        <button class="w-[81px]">Developer</button>
        <button class="w-[108px] ml-[2px] bg-[#f1f1f1] text-[#217346] font-[Roboto,sans-serif]">XLibraryDisplay</button>
        <button class="ml-[15px] flex items-center gap-[7px] font-[Roboto,sans-serif]"><svg class="w-[10px] h-[15px]" viewBox="0 0 10 15" fill="none" stroke="#e4f4ea"><path d="M3 11C3 8 .5 8 .5 5a4.5 4.5 0 019 0C9.5 8 7 8 7 11zM3 12.5h4M3.5 14.5h3"/></svg>Tell me what you want to do</button>
        <button class="ml-auto mr-[6px] flex items-center gap-[5px] font-[Roboto,sans-serif]"><svg class="w-[17px] h-[17px]" viewBox="0 0 17 17" fill="none" stroke="#e4f4ea" stroke-width="1.3"><circle cx="8" cy="5" r="4.3"/><path d="M1 16c0-4 3-6 6-7M10 9l2 2M13 10v7M9.5 13.5h7"/></svg>Share</button>
      </nav>
    </header>

    <div class="relative flex h-[93px] shrink-0 bg-[#f1f1f1] border-b border-[#cdcdcd] overflow-hidden font-[Roboto,sans-serif]">
      <div id="ribbon" class="flex"></div>
      <button class="absolute right-[11px] bottom-[4px]" aria-label="Collapse the ribbon"><svg class="w-[9px] h-[6px]" viewBox="0 0 9 6" fill="none" stroke="#555" stroke-width="1.8"><path d="M1 5l3.5-4L8 5"/></svg></button>
    </div>

    <div class="flex items-stretch shrink-0 h-[46px] py-[10px] pl-[5px] pr-[5px] text-[13px]">
      <div class="flex items-center w-[102px] bg-white border border-[#bdbdbd]">
        <input aria-label="Name box" value="A1" class="w-[80px] pl-[6px] outline-none">
        <button aria-label="Name list" class="ml-auto mr-[6px]"><svg class="w-[7px] h-[5px]" viewBox="0 0 7 5"><path d="M0 0h7L3.5 4.5z" fill="#666"/></svg></button>
      </div>
      <svg class="w-[30px] self-center h-[13px]" viewBox="0 0 30 13" fill="#999"><path d="M13 0h2v2h-2zM13 5h2v2h-2zM13 10h2v2h-2z"/></svg>
      <div class="flex items-center w-[109px] bg-white border border-[#bdbdbd]">
        <button aria-label="Cancel entry" class="ml-[13px]"><svg class="w-[11px] h-[11px]" viewBox="0 0 11 11" stroke="#c0c0c0" stroke-width="1.6"><path d="M1 1l9 9M10 1l-9 9"/></svg></button>
        <button aria-label="Enter" class="ml-[24px]"><svg class="w-[13px] h-[10px]" viewBox="0 0 13 10" fill="none" stroke="#c0c0c0" stroke-width="2"><path d="M1 6l3 3 8-8"/></svg></button>
        <button aria-label="Insert function" class="ml-[23px] font-['Liberation_Serif',serif] italic text-[15px] font-bold text-[#555]">f<span class="text-[11px]">x</span></button>
      </div>
      <div class="flex flex-1 items-center ml-[4px] bg-white border border-[#bdbdbd]">
        <input aria-label="Formula bar" value="Fab LC" class="flex-1 pl-[11px] outline-none">
        <button aria-label="Expand formula bar" class="mr-[4px]"><svg class="w-[8px] h-[6px]" viewBox="0 0 8 6" fill="none" stroke="#555" stroke-width="1.8"><path d="M1 1l3 3.5L7 1"/></svg></button>
      </div>
    </div>

    <main class="flex flex-1 min-h-0">
      <div class="flex-1 min-w-0 overflow-hidden bg-white border-r border-[#9a9a9a]">
        <table id="sheet" class="table-fixed border-separate border-spacing-0 w-[1909px] text-center text-[10px] leading-[11px] text-black font-['Liberation_Sans',sans-serif]"></table>
      </div>
      <div class="flex flex-col w-[21px] pl-[4px] pr-[2px] pt-[2px] items-stretch">
        <button aria-label="Scroll up" class="h-[15px] bg-white border border-[#b4b4b4] flex items-center justify-center"><svg class="w-[7px] h-[4px]" viewBox="0 0 7 4"><path d="M3.5 0L7 4H0z" fill="#666"/></svg></button>
        <div class="flex-1 bg-[#d9d9d9] pt-[319px]"><div class="h-full bg-white border border-[#b4b4b4]"></div></div>
        <button aria-label="Scroll down" class="h-[15px] bg-white border border-[#b4b4b4] flex items-center justify-center"><svg class="w-[7px] h-[4px]" viewBox="0 0 7 4"><path d="M3.5 4L0 0h7z" fill="#666"/></svg></button>
      </div>
    </main>

    <footer class="shrink-0 border-t border-[#9c9c9c]">
      <div class="flex h-[28px] items-start text-[13px] text-[#444]">
        <div class="flex w-[103px] pt-[9px] pl-[26px] gap-[25px]"><svg class="w-[5px] h-[8px]" viewBox="0 0 5 8"><path d="M5 0v8L0 4z" fill="#c4c4c4"/></svg><svg class="w-[5px] h-[8px]" viewBox="0 0 5 8"><path d="M0 0v8l5-4z" fill="#c4c4c4"/></svg></div>
        <button class="w-[47px] h-[22px] mt-[3px] mr-[3px] bg-[#12a850] text-[#0c4020]">Start</button>
        <div id="tabs" class="flex border-l border-[#b8b8b8]"></div>
        <button aria-label="New sheet" class="ml-[34px] mt-[5px]"><svg class="w-[17px] h-[17px]" viewBox="0 0 17 17" fill="none" stroke="#666"><circle cx="8.5" cy="8.5" r="7.5"/><path d="M8.5 4.5v8M4.5 8.5h8" stroke-width="1.5"/></svg></button>
        <svg class="ml-auto mr-[15px] mt-[8px] w-[3px] h-[12px]" viewBox="0 0 3 12" fill="#999"><path d="M0 0h2v2H0zM0 5h2v2H0zM0 10h2v2H0z"/></svg>
        <div class="flex w-[454px] h-[15px] mt-[6px] mr-[23px] bg-[#d9d9d9]">
          <button aria-label="Scroll left" class="w-[15px] bg-white border border-[#b4b4b4] flex items-center justify-center"><svg class="w-[4px] h-[7px]" viewBox="0 0 4 7"><path d="M4 0v7L0 3.5z" fill="#555"/></svg></button>
          <div class="w-[149px] bg-white border border-[#b4b4b4]"></div>
          <button aria-label="Scroll right" class="ml-auto w-[15px] bg-white border border-[#b4b4b4] flex items-center justify-center"><svg class="w-[4px] h-[7px]" viewBox="0 0 4 7"><path d="M0 0v7l4-3.5z" fill="#555"/></svg></button>
        </div>
      </div>
      <div class="flex items-center h-[22px] bg-[#f1f1f1] border-t border-[#cfcfcf] pl-[7px] font-[Roboto,sans-serif]">
        <span>Ready</span>
        <svg class="ml-[17px] w-[14px] h-[13px]" viewBox="0 0 14 13" fill="none" stroke="#777"><path d="M3.5 2.5h9v10h-11v-7M4 6h7M4 8h7M4 10h7" /><circle cx="3" cy="2.5" r="2" fill="#555" stroke="none"/></svg>
        <div class="ml-auto flex items-center h-full">
          <button aria-label="Normal view" class="flex items-center justify-center w-[38px] h-full bg-[#c8c8c8]"><svg class="w-[14px] h-[12px]" viewBox="0 0 14 12" fill="none" stroke="#555"><path d="M.5.5h13v11H.5zM.5 4.2h13M.5 7.8h13M5 .5v11M9.5.5v11"/></svg></button>
          <button aria-label="Page layout view" class="flex items-center justify-center w-[38px] h-full"><svg class="w-[14px] h-[12px]" viewBox="0 0 14 12" fill="none" stroke="#555"><path d="M.5.5h13v11H.5zM3.5 2.5h7v9M3.5 2.5v9M5 5h4M5 7h4M5 9h4"/></svg></button>
          <button aria-label="Page break view" class="flex items-center justify-center w-[38px] h-full"><svg class="w-[14px] h-[12px]" viewBox="0 0 14 12" fill="none" stroke="#555"><path d="M.5.5h13v11H.5zM.5 8h8.5V.5M5 .5V8"/></svg></button>
          <button aria-label="Zoom out" class="ml-[5px] text-[15px] leading-none font-bold w-[8px]">−</button>
          <svg class="w-[100px] h-[12px] ml-[3px]" viewBox="0 0 100 12"><path d="M0 6h100M50 3v6" stroke="#888"/><path d="M27 1h3v10h-3z" fill="#444"/></svg>
          <button aria-label="Zoom in" class="ml-[3px] text-[15px] leading-none font-bold w-[12px]">+</button>
          <span class="w-[34px] ml-[7px] mr-[7px] text-center">60%</span>
        </div>
      </div>
      <div class="relative h-[8px] bg-black overflow-hidden">
        <div class="ml-[442px] w-[48px] h-full bg-[#333]"></div>
        <span class="absolute right-[62px] top-[3px] text-white text-[11px] leading-4">7:25 PM</span>
      </div>
    </footer>

    <form role="dialog" aria-labelledby="dlg" class="absolute left-[1316px] top-[291px] w-[300px] h-[257px] flex flex-col bg-[#f0f0f0] border border-[#2a7d9c] shadow-[3px_4px_10px_rgba(0,0,0,0.35)] text-black text-[11px] font-[Roboto,sans-serif]">
      <div class="flex items-center justify-between bg-white h-[30px] pl-[8px] pr-[11px] text-[12px]">
        <h2 id="dlg">Select options...</h2>
        <button type="button" aria-label="Close dialog"><svg class="w-[11px] h-[11px]" viewBox="0 0 11 11" stroke="#111" stroke-width="1.2"><path d="M0 0l11 11M11 0L0 11"/></svg></button>
      </div>
      <label class="flex items-center gap-[5px] ml-[9px] mt-[12px] h-4">
        <input type="checkbox" checked class="peer appearance-none w-[11px] h-[11px] bg-white border border-[#777] border-b-[#ddd] border-r-[#ddd]">
        <svg class="-ml-[15px] w-[9px] h-[9px]" viewBox="0 0 9 9" fill="none" stroke="#000" stroke-width="2"><path d="M1 4l2.5 3L8 1.5"/></svg>
        Box unusual amino acids in red
      </label>
      <div class="flex gap-[9px] ml-[8px] mt-[3px]">
        <fieldset class="w-[175px] h-[120px] border border-[#a8a8a8] px-[10px]">
          <legend class="px-[3px] leading-4">Scaffold</legend>
          <div class="grid grid-cols-[88px_1fr] grid-rows-[repeat(4,24px)] grid-flow-col items-center pt-px">
            <label class="flex items-center gap-[5px]"><input type="radio" name="scaffold" class="appearance-none w-[12px] h-[12px] rounded-full bg-white border border-[#888] border-r-[#e4e4e4] border-b-[#e4e4e4] checked:bg-[radial-gradient(#000_0_2px,#fff_3px)]">scFv VHVL</label>
            <label class="flex items-center gap-[5px]"><input type="radio" name="scaffold" class="appearance-none w-[12px] h-[12px] rounded-full bg-white border border-[#888] border-r-[#e4e4e4] border-b-[#e4e4e4] checked:bg-[radial-gradient(#000_0_2px,#fff_3px)]">scFv VLVH</label>
            <label class="flex items-center gap-[5px]"><input type="radio" name="scaffold" class="appearance-none w-[12px] h-[12px] rounded-full bg-white border border-[#888] border-r-[#e4e4e4] border-b-[#e4e4e4] checked:bg-[radial-gradient(#000_0_2px,#fff_3px)]">VH only</label>
            <label class="flex items-center gap-[5px]"><input type="radio" name="scaffold" class="appearance-none w-[12px] h-[12px] rounded-full bg-white border border-[#888] border-r-[#e4e4e4] border-b-[#e4e4e4] checked:bg-[radial-gradient(#000_0_2px,#fff_3px)]">VL only</label>
            <label class="flex items-center gap-[5px]"><input type="radio" name="scaffold" class="appearance-none w-[12px] h-[12px] rounded-full bg-white border border-[#888] border-r-[#e4e4e4] border-b-[#e4e4e4] checked:bg-[radial-gradient(#000_0_2px,#fff_3px)]">IgG HC</label>
            <label class="flex items-center gap-[5px]"><input type="radio" name="scaffold" class="appearance-none w-[12px] h-[12px] rounded-full bg-white border border-[#888] border-r-[#e4e4e4] border-b-[#e4e4e4] checked:bg-[radial-gradient(#000_0_2px,#fff_3px)]">Fab HC</label>
            <label class="flex items-center gap-[5px]"><input type="radio" name="scaffold" checked class="appearance-none w-[12px] h-[12px] rounded-full bg-white border border-[#888] border-r-[#e4e4e4] border-b-[#e4e4e4] checked:bg-[radial-gradient(#000_0_2px,#fff_3px)]">LC</label>
          </div>
        </fieldset>
        <fieldset class="w-[95px] h-[120px] border border-[#a8a8a8] px-[10px]">
          <legend class="px-[3px] leading-4">CDRs</legend>
          <div class="grid grid-rows-[repeat(4,24px)] items-center pt-px">
            <label class="flex items-center gap-[5px]"><input type="radio" name="cdr" checked class="appearance-none w-[12px] h-[12px] rounded-full bg-white border border-[#888] border-r-[#e4e4e4] border-b-[#e4e4e4] checked:bg-[radial-gradient(#000_0_2px,#fff_3px)]">ABM</label>
            <label class="flex items-center gap-[5px]"><input type="radio" name="cdr" class="appearance-none w-[12px] h-[12px] rounded-full bg-white border border-[#888] border-r-[#e4e4e4] border-b-[#e4e4e4] checked:bg-[radial-gradient(#000_0_2px,#fff_3px)]">Chothia</label>
            <label class="flex items-center gap-[5px]"><input type="radio" name="cdr" class="appearance-none w-[12px] h-[12px] rounded-full bg-white border border-[#888] border-r-[#e4e4e4] border-b-[#e4e4e4] checked:bg-[radial-gradient(#000_0_2px,#fff_3px)]">Contact</label>
            <label class="flex items-center gap-[5px]"><input type="radio" name="cdr" class="appearance-none w-[12px] h-[12px] rounded-full bg-white border border-[#888] border-r-[#e4e4e4] border-b-[#e4e4e4] checked:bg-[radial-gradient(#000_0_2px,#fff_3px)]">Kabat</label>
          </div>
        </fieldset>
      </div>
      <p class="ml-[7px] mt-[8px] leading-4 whitespace-nowrap">Please note correct CDR assignments are not guaranteed.</p>
      <div class="flex justify-end gap-[8px] mr-[11px] mt-[9px]">
        <button type="button" class="w-[96px] h-[32px] border border-white border-r-[#777] border-b-[#777] shadow-[1px_1px_0_#aaa]">Cancel</button>
        <button type="button" class="w-[96px] h-[32px] border border-black border-r-2 border-b-2 p-[2px]"><span class="flex items-center justify-center h-full border border-dotted border-[#555]">OK</span></button>
      </div>
    </form>
  </body>

</html>
